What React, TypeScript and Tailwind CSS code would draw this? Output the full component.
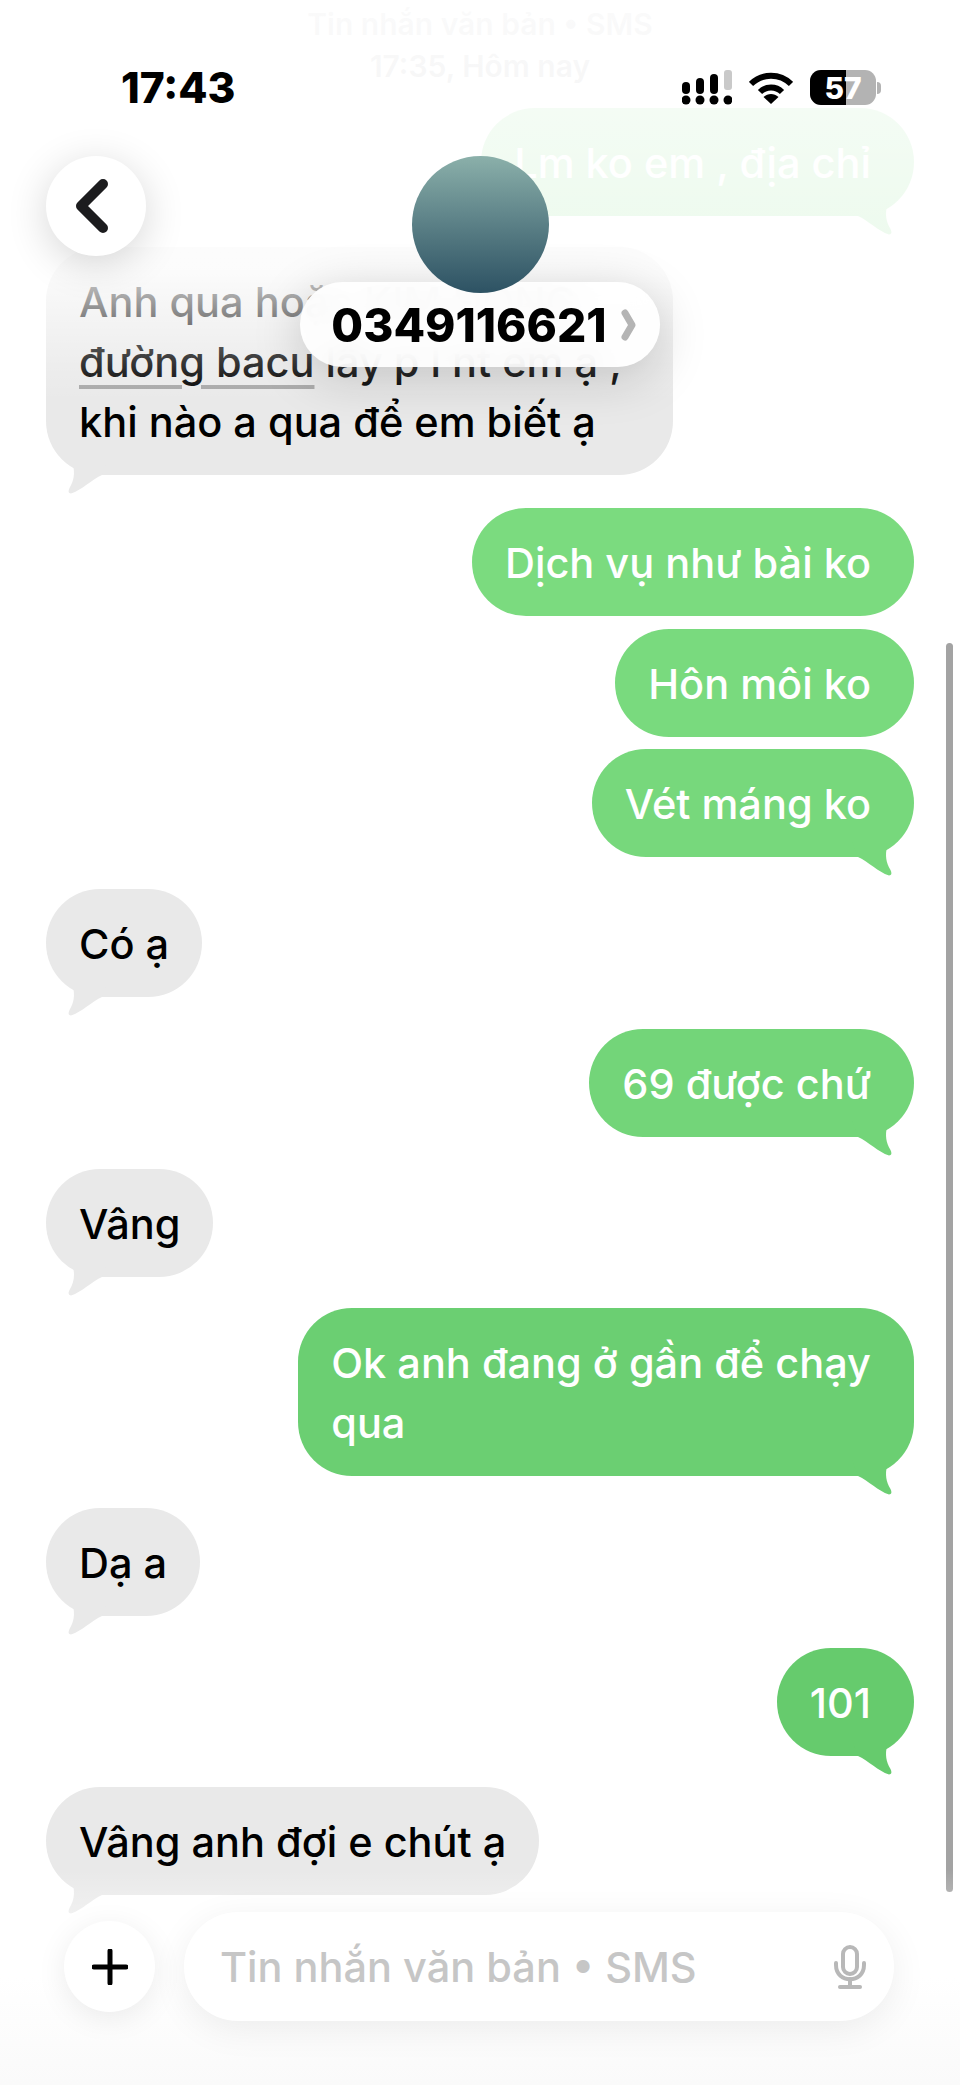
import React from 'react'

type Message = {
  from: 'me' | 'them'
  lines: React.ReactNode[]
  bg: string
  tail: string
  mt: string
  tailed?: boolean
  width?: string
}

const messages: Message[] = [
  { from: 'me', lines: ['Lm ko em , địa chỉ'], bg: 'bg-[#7fdd84]', tail: 'fill-[#7fdd84]', mt: 'mt-[21px]', tailed: true },
  {
    from: 'them',
    lines: [
      'Anh qua hoặc KIM ĐỒNG',
      <>
        <span className="underline [text-decoration-color:#a6a6a6] [text-decoration-thickness:4px] underline-offset-[8px]">đường bacu</span> lấy p l nt em ạ ,
      </>,
      'khi nào a qua để em biết ạ',
    ],
    bg: 'bg-[#e9e9e9]',
    tail: 'fill-[#e9e9e9]',
    mt: 'mt-[31px]',
    tailed: true,
    width: 'w-[627px]',
  },
  { from: 'me', lines: ['Dịch vụ như bài ko'], bg: 'bg-[#7bdb7f]', tail: 'fill-[#7bdb7f]', mt: 'mt-[33px]' },
  { from: 'me', lines: ['Hôn môi ko'], bg: 'bg-[#79da7e]', tail: 'fill-[#79da7e]', mt: 'mt-[13px]' },
  { from: 'me', lines: ['Vét máng ko'], bg: 'bg-[#77d87c]', tail: 'fill-[#77d87c]', mt: 'mt-[12px]', tailed: true },
  { from: 'them', lines: ['Có ạ'], bg: 'bg-[#e9e9e9]', tail: 'fill-[#e9e9e9]', mt: 'mt-[32px]', tailed: true },
  { from: 'me', lines: ['69 được chứ'], bg: 'bg-[#73d579]', tail: 'fill-[#73d579]', mt: 'mt-[32px]', tailed: true },
  { from: 'them', lines: ['Vâng'], bg: 'bg-[#e9e9e9]', tail: 'fill-[#e9e9e9]', mt: 'mt-[32px]', tailed: true },
  { from: 'me', lines: ['Ok anh đang ở gần để chạy', 'qua'], bg: 'bg-[#6bcf72]', tail: 'fill-[#6bcf72]', mt: 'mt-[31px]', tailed: true },
  { from: 'them', lines: ['Dạ a'], bg: 'bg-[#e9e9e9]', tail: 'fill-[#e9e9e9]', mt: 'mt-[32px]', tailed: true },
  { from: 'me', lines: ['101'], bg: 'bg-[#66cb6d]', tail: 'fill-[#66cb6d]', mt: 'mt-[32px]', tailed: true },
  { from: 'them', lines: ['Vâng anh đợi e chút ạ'], bg: 'bg-[#e9e9e9]', tail: 'fill-[#e9e9e9]', mt: 'mt-[31px]', tailed: true },
]

function Tail({ from, className }: { from: 'me' | 'them'; className: string }) {
  return (
    <svg
      viewBox="0 0 70 40"
      className={`absolute bottom-[-20px] w-[70px] h-[40px] ${from === 'me' ? 'right-0 -scale-x-100' : 'left-0'} ${className}`}
    >
      <path d="M27 10 C29 18 28 26 23.5 33 Q21 38 25 38.5 C36 35 45 25 56 20 L62 4 L30 4 Z" />
    </svg>
  )
}

function Bubble({ m }: { m: Message }) {
  const me = m.from === 'me'
  return (
    <div className={`relative ${m.mt} ${m.width ?? ''} ${me ? 'self-end' : 'self-start'} ${m.bg} rounded-[54px] pt-[25px] pb-[23px] pl-[33px] ${me ? 'pr-[43px] text-white' : 'pr-[33px] text-black'}`}>
      {m.lines.map((line, i) => (
        <div key={i} className="whitespace-nowrap">{line}</div>
      ))}
      {m.tailed && <Tail from={m.from} className={m.tail} />}
    </div>
  )
}

function StatusIcons() {
  return (
    <div className="flex items-center">
      <svg viewBox="0 0 50 35" className="w-[50px] h-[35px]">
        <rect x="0" y="12" width="8" height="12" rx="4" fill="#000" />
        <rect x="14" y="8" width="8" height="16" rx="4" fill="#000" />
        <rect x="28" y="4" width="8" height="20" rx="4" fill="#000" />
        <rect x="42" y="0" width="8" height="20" rx="3" fill="#c9c9c9" />
        <circle cx="4" cy="30" r="4.5" fill="#000" />
        <circle cx="18" cy="30" r="4.5" fill="#000" />
        <circle cx="32" cy="30" r="4.5" fill="#000" />
        <circle cx="46" cy="30" r="4.5" fill="#000" />
      </svg>
      <svg viewBox="0 0 44 32" className="ml-[17px] w-[44px] h-[32px]" fill="none" stroke="#000" strokeWidth="6">
        <path d="M2 12 C13 1 31 1 42 12" />
        <path d="M11 20 C17 14 27 14 33 20" />
        <path d="M22 32 L14.5 25 C19 21 25 21 29.5 25 Z" fill="#000" stroke="none" />
      </svg>
      <div className="ml-[17px] relative flex w-[66px] h-[35px] rounded-[11px] overflow-hidden bg-[#b3b3b3]">
        <div className="w-[36px] bg-black" />
        <span className="absolute inset-0 flex items-center justify-center text-[30px] font-extrabold text-white">57</span>
      </div>
      <div className="ml-[1px] w-[4px] h-[12px] rounded-r-full bg-[#b3b3b3]" />
    </div>
  )
}

function Header() {
  return (
    <div className="absolute inset-x-0 top-0">
      <div className="flex items-center justify-between pt-[70px] pl-[121px] pr-[79px] h-[105px]">
        <span className="text-[42.5px] leading-[35px] font-extrabold text-black">17:43</span>
        <StatusIcons />
      </div>
      <div className="relative flex flex-col items-center pt-[51px]">
        <button className="absolute left-[46px] top-[51px] flex items-center justify-center w-[100px] h-[100px] rounded-full bg-white shadow-[0_8px_40px_rgba(0,0,0,0.16)]">
          <svg viewBox="0 0 34 54" className="w-[34px] h-[54px] mr-[8px]" fill="none" stroke="#1c1c1e" strokeWidth="10" strokeLinecap="round" strokeLinejoin="round">
            <polyline points="28,5 6,27 28,49" />
          </svg>
        </button>
        <div className="relative z-10 w-[137px] h-[137px] rounded-full bg-gradient-to-b from-[#8bb0aa] to-[#2d5263]" />
        <div className="-mt-[11px] flex items-center h-[85px] pl-[31px] pr-[24px] rounded-full bg-white/90 backdrop-blur-md shadow-[0_10px_50px_rgba(0,0,0,0.18)]">
          <span className="text-[46px] font-extrabold text-black">0349116621</span>
          <svg viewBox="0 0 15 32" className="ml-[14px] w-[15px] h-[32px]" fill="none" stroke="#b4b4b4" strokeWidth="7" strokeLinecap="round" strokeLinejoin="round">
            <polyline points="4,4 11,16 4,28" />
          </svg>
        </div>
      </div>
    </div>
  )
}

function Composer() {
  return (
    <div className="absolute inset-x-0 bottom-0 h-[215px] bg-gradient-to-b from-white/0 via-white/80 to-[#fafafa]">
      <div className="flex items-center gap-[29px] pl-[64px] pr-[66px] pt-[42px]">
        <button className="flex items-center justify-center shrink-0 w-[91px] h-[91px] rounded-full bg-white shadow-[0_6px_30px_rgba(0,0,0,0.08)]">
          <svg viewBox="0 0 36 36" className="w-[36px] h-[36px]" stroke="#000" strokeWidth="5" strokeLinecap="round">
            <line x1="18" y1="2" x2="18" y2="34" />
            <line x1="2" y1="18" x2="34" y2="18" />
          </svg>
        </button>
        <div className="flex flex-1 items-center justify-between h-[109px] pl-[36px] pr-[28px] rounded-[54px] bg-white shadow-[0_8px_36px_rgba(0,0,0,0.07)]">
          <span className="text-[#c6c6c6]">Tin nhắn văn bản • SMS</span>
          <svg viewBox="0 0 32 44" className="w-[32px] h-[44px]" fill="none" stroke="#b8b8b8" strokeWidth="4" strokeLinecap="round">
            <rect x="9" y="2" width="14" height="27" rx="7" />
            <path d="M2 18 V20 C2 39 30 39 30 20 V18" />
            <line x1="16" y1="34" x2="16" y2="41" />
            <line x1="6" y1="42" x2="26" y2="42" />
          </svg>
        </div>
      </div>
    </div>
  )
}

export default function App() {
  return (
    <div className="relative w-[960px] h-[2085px] overflow-hidden bg-white font-['Inter',_sans-serif] text-[41.5px] leading-[60px] font-medium">
      <div className="flex flex-col px-[46px] pt-[3px]">
        <div className="text-center text-[30px] leading-[42px] font-semibold text-[#8e8e93]">
          <div>Tin nhắn văn bản • SMS</div>
          <div>17:35, Hôm nay</div>
        </div>
        {messages.map((m, i) => (
          <Bubble key={i} m={m} />
        ))}
      </div>

      {/* fade under the status bar */}
      <div className="absolute inset-x-0 top-0 h-[400px] bg-[linear-gradient(to_bottom,rgba(255,255,255,0.96)_0%,rgba(255,255,255,0.87)_54%,rgba(255,255,255,0.86)_67%,rgba(255,255,255,0.6)_76%,rgba(255,255,255,0.2)_91%,rgba(255,255,255,0)_100%)]" />

      <div className="absolute right-[7px] top-[643px] w-[7px] h-[1249px] rounded-full bg-[#a3a3a3]" />

      <Header />
      <Composer />
    </div>
  )
}
